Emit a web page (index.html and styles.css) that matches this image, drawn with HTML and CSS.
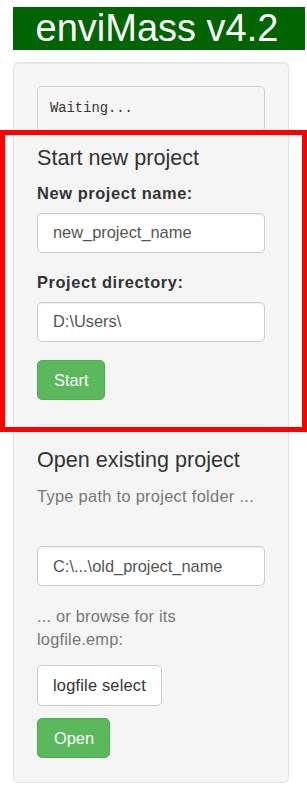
FILE: index.html
```html
<!DOCTYPE html>
<html lang="en">
<head>
    <meta charset="UTF-8">
    <meta name="viewport" content="width=device-width, initial-scale=1.0">
    <title>enviMass</title>
    <link rel="stylesheet" href="styles.css">
</head>
<body>
    <div class="page">
        <div class="title-bar">enviMass v4.2</div>

        <div class="well">
            <pre class="status">Waiting...</pre>

            <h4>Start new project</h4>
            <div class="form-group">
                <label for="new-name">New project name:</label>
                <input type="text" id="new-name" class="form-control" value="new_project_name">
            </div>
            <div class="form-group">
                <label for="new-dir">Project directory:</label>
                <input type="text" id="new-dir" class="form-control" value="D:\Users\">
            </div>
            <button class="btn btn-success">Start</button>

            <hr>

            <h4>Open existing project</h4>
            <p class="help-text path-hint">Type path to project folder ...</p>
            <div class="form-group">
                <input type="text" id="old-dir" class="form-control" value="C:\...\old_project_name">
            </div>
            <p class="help-text browse-hint">... or browse for its<br>logfile.emp:</p>
            <button class="btn btn-default btn-logfile">logfile select</button>
            <button class="btn btn-success btn-open">Open</button>
        </div>
    </div>

    <div class="highlight"></div>
</body>
</html>
```

FILE: styles.css
```css
* {
    box-sizing: border-box;
}
body {
    margin: 0;
    background: #ffffff;
    font-family: "Liberation Sans", Arial, sans-serif;
    font-size: 16.4px;
    line-height: 1.43;
    color: #333333;
}
.page {
    padding: 7px 2px 12px 13px;
}
.title-bar {
    height: 43px;
    background: #006400;
    color: #ffffff;
    font-size: 38px;
    line-height: 43px;
    text-align: center;
    padding-right: 4px;
}
.well {
    width: 276px;
    margin-top: 12px;
    padding: 23px 23px 24px;
    background: #f5f5f5;
    border: 1px solid #e3e3e3;
    border-radius: 5px;
    box-shadow: inset 0 1px 1px rgba(0, 0, 0, 0.05);
}
.status {
    margin: 0 0 13.5px;
    padding: 11px 12px;
    font-family: "Liberation Mono", "DejaVu Sans Mono", monospace;
    font-size: 13.8px;
    line-height: 22px;
    color: #333333;
    background: #f5f5f5;
    border: 1px solid #cccccc;
    border-radius: 5px;
}
h4 {
    margin: 13.5px 0 13.5px;
    font-size: 21.6px;
    font-weight: 400;
    line-height: 1.07;
}
.form-group {
    margin-bottom: 18.5px;
}
label {
    display: block;
    margin-bottom: 7px;
    font-weight: 700;
    letter-spacing: 0.6px;
}
.form-control {
    display: block;
    width: 100%;
    height: 40px;
    padding: 7px 15px;
    font-family: inherit;
    font-size: 16.4px;
    color: #555555;
    background: #ffffff;
    border: 1px solid #cccccc;
    border-radius: 5px;
    box-shadow: inset 0 1px 1px rgba(0, 0, 0, 0.075);
}
.btn {
    display: block;
    height: 40px;
    padding: 7px 15px;
    font-family: inherit;
    font-size: 16.4px;
    line-height: 23px;
    border: 1px solid transparent;
    border-radius: 5px;
    cursor: pointer;
}
.btn-success {
    color: #ffffff;
    background: #5cb85c;
    border-color: #4cae4c;
    padding: 7px 15px 7px 16px;
}
.btn-default {
    color: #333333;
    background: #ffffff;
    border-color: #cccccc;
}
.btn-logfile {
    height: 41px;
    letter-spacing: 0.2px;
    margin-bottom: 12px;
}
hr {
    margin: 24px 0 23px;
    border: 0;
    border-top: 1px solid #eaeaea;
}
.help-text {
    margin: 0;
    color: #777777;
}
.path-hint {
    letter-spacing: 0.3px;
    margin-bottom: 38px;
}
.browse-hint {
    letter-spacing: 0.2px;
    margin-bottom: 14px;
}
.highlight {
    position: absolute;
    left: 0;
    top: 130px;
    width: 307px;
    height: 302px;
    border: 5px solid #ff0000;
}
```
